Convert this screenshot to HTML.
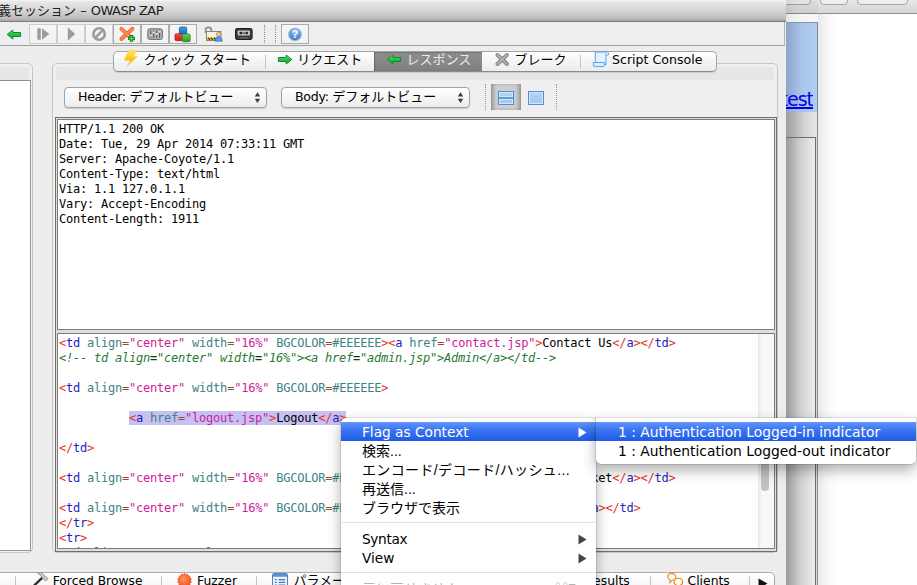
<!DOCTYPE html>
<html lang="ja">
<head>
<meta charset="utf-8">
<title>OWASP ZAP</title>
<style>
*{box-sizing:border-box;margin:0;padding:0}
html,body{width:917px;height:585px;overflow:hidden;background:#fff}
body{position:relative;font-family:"Liberation Sans","Noto Sans CJK JP",sans-serif;font-size:13px;color:#000}
.abs{position:absolute}
/* ---------- background browser window ---------- */
#bgwin{left:786px;top:0;width:131px;height:585px;background:#fff}
#bgtop{left:0;top:0;width:131px;height:14px;background:linear-gradient(#e6e6e6,#d6d6d6);border-bottom:1px solid #8f8f8f}
.bgb{position:absolute;top:-6px;height:11px;border:1px solid #a6a6a6;border-radius:4px;background:#eeeeee}
#bgblue{left:0;top:22px;width:32px;height:90px;background:linear-gradient(90deg,#8ea4c9,#a9c4ea 50%,#b2cdf2);border-right:1px solid #7d8899;border-top:1px solid #8a97ad}
#bgsb1{left:0;top:112px;width:32px;height:25px;background:linear-gradient(90deg,#9c9c9c,#d4d4d4 60%,#e6e6e6);border-right:1px solid #8a8a8a}
#bgsb2{left:0;top:137px;width:30px;height:448px;background:linear-gradient(90deg,#9a9a9a,#d0d0d0 50%,#ececec);border-top:1px solid #6e6e6e;border-right:1px solid #6e6e6e}
#bgsb3{left:30px;top:137px;width:2px;height:448px;background:#d8d8d8;border-right:1px solid #8a8a8a}
#bgshadow{left:32px;top:14px;width:20px;height:571px;background:linear-gradient(90deg,rgba(0,0,0,.085),rgba(0,0,0,.03) 45%,rgba(0,0,0,0))}
#test{left:0;top:88px;width:27px;overflow:hidden;font-size:19px;color:#0000ee;text-decoration:underline;direction:rtl;white-space:nowrap;letter-spacing:-1px;text-decoration-thickness:1.6px;font-family:"DejaVu Sans","Liberation Sans",sans-serif}
/* ---------- main window ---------- */
#win{left:0;top:0;width:786px;height:585px;background:#ededed;border-top-right-radius:5px;overflow:hidden}
#title{left:0;top:0;width:786px;height:22px;background:linear-gradient(#e9e9e9,#d6d6d6 45%,#bcbcbc 88%,#a4a4a4);border-bottom:1px solid #7e7e7e;border-top:1px solid #f2f2f2;border-top-right-radius:5px}
#title span{position:absolute;left:-2px;top:0px;font-size:13px;line-height:20px;white-space:pre;color:#222}
#title span b{font-weight:normal;letter-spacing:-0.55px}
#toolbar{left:0;top:22px;width:785px;height:24px;background:#eeeeee;border-bottom:1px solid #9d9d9d;border-right:1px solid #b5b5b5}

.tb{position:absolute;top:2px;width:28px;height:20px;border:1px solid #cdcdcd;background:linear-gradient(#f6f6f6,#f1f1f1)}
.tb.en{border-color:#ababab}
.tb svg{display:block;margin-top:1px}
.ic{position:absolute}

/* ---------- panels ---------- */
#lpanel{left:-8px;top:63px;width:41px;height:490px;border:1px solid #c6c6c6;border-radius:5px;background:linear-gradient(#e6e6e6,#e6e6e6) 3px 3px / calc(100% - 6px) 13px no-repeat,#efefef}
#lwhite{left:0;top:80px;width:31px;height:471px;background:#fff;border-right:1px solid #949494;border-bottom:1px solid #949494;border-top:1px solid #8e8e8e}
#rpanel{left:52px;top:63px;width:726px;height:490px;border:1px solid #c6c6c6;border-radius:5px;background:linear-gradient(#e6e6e6,#e6e6e6) 3px 3px / calc(100% - 6px) 13px no-repeat,#efefef}
#tabs{left:113px;top:51px;width:604px;height:21px;border:1px solid #a4a4a4;border-bottom-color:#8a8a8a;border-radius:5px;background:linear-gradient(#ffffff,#f4f4f4 50%,#ececec);box-shadow:0 1px 1px rgba(0,0,0,.12);white-space:nowrap;font-size:13px}
.tab{position:absolute;top:0;height:19px;line-height:17px}
.tab .sep{position:absolute;right:0;top:3px;height:14px;width:1px;background:#c4c4c4}
.tab span{position:absolute;top:-1px;white-space:nowrap}
.tab svg{position:absolute}
#tsel{background:linear-gradient(#747474,#8c8c8c 2px,#888 50%,#7f7f7f);color:#ececec;box-shadow:inset 1px 0 1px rgba(0,0,0,.25)}
.combo{position:absolute;top:87px;height:21px;border:1px solid #a3a3a3;border-radius:4px;background:linear-gradient(#ffffff,#f6f6f6 50%,#ececec);box-shadow:0 1px 1px rgba(0,0,0,.15);font-size:13px;line-height:18px;white-space:nowrap}
.combo span{position:absolute;top:0}
.combo svg{position:absolute;right:5.5px;top:4px}
.vb{width:16px;height:14px;border:1px solid #4f8fd8;background:linear-gradient(#b4d2f4,#a4c6ee);box-shadow:inset 0 0 0 1px #d4e6fa}
.vb i{position:absolute;left:0;right:0;top:5px;height:2px;background:#5f9be0;box-shadow:0 1px 0 #d4e6fa,0 -1px 0 #d4e6fa}
.lat{font-family:"DejaVu Sans","Liberation Sans",sans-serif}

/* ---------- text areas ---------- */
#split{left:55px;top:117px;width:722px;height:435px;border:1px solid #6f6f6f;background:#dedede}
.ta{position:absolute;left:1px;width:718px;border:1px solid #7c7c7c;background:#fff;overflow:hidden;font-family:"DejaVu Sans Mono","Liberation Mono",monospace;font-size:12px;letter-spacing:-0.224px;line-height:15px;white-space:pre;padding:2px 0 0 1px;color:#000}
#ta1{top:1px;height:211px}
#ta2{top:215px;height:216px}
.r{color:#e8341f}.b{color:#2222c4}.t{color:#3c8484}.e{color:#9a4a3a}.m{color:#d0209c}.c{color:#1f7a34;font-style:italic}.c b{color:#163a1c}
.sel{background:#c6c1f3}
#vsb{right:0;top:0;width:16px;height:100%;background:linear-gradient(90deg,#ececec,#f7f7f7 3px,#f6f6f6);border-left:1px solid #e6e6e6}
#thumb{left:2px;top:100px;width:8px;height:57px;border-radius:4px;background:#c1c1c1}
/* ---------- bottom tabs ---------- */
#btabs{left:-6px;top:572px;width:781px;height:20px;border:1px solid #a9a9a9;border-radius:5px;background:linear-gradient(#ffffff,#f3f3f3);font-size:13px;white-space:nowrap}
#btabs .sep{position:absolute;top:3px;width:1px;height:16px;background:#c4c4c4}
#btabs span{position:absolute;top:-1.5px;line-height:18px}
#btabs svg{position:absolute}
/* ---------- menus ---------- */
.menu{position:absolute;background:#fff;box-shadow:0 0 0 1px rgba(0,0,0,.10),0 6px 14px rgba(0,0,0,.32);font-size:14px;white-space:nowrap}
.mi{position:absolute;left:0;right:0;height:19px;line-height:20px}
.mi span{position:absolute;top:0}
.mi svg{position:absolute;top:4.5px}
.hi{background:linear-gradient(#6495f8,#4079f3 35%,#1d5ae8);color:#fff}
.msep{position:absolute;left:1px;right:1px;height:1px;background:#e2e2e2}
</style>
</head>
<body>
<div id="bgwin" class="abs">
  <div id="bgtop" class="abs"><i class="bgb" style="left:-6px;width:31px"></i><i class="bgb" style="left:34px;width:28px"></i><i class="bgb" style="left:71px;width:51px"></i></div>
  <div id="bgblue" class="abs"></div>
  <div id="test" class="abs">test</div>
  <div id="bgsb1" class="abs"></div>
  <div id="bgsb2" class="abs"></div>
  <div id="bgsb3" class="abs"></div>
  <div id="bgshadow" class="abs"></div>
  <div class="abs" style="left:0;top:0;width:32px;height:22px;background:linear-gradient(90deg,rgba(0,0,0,.1),rgba(0,0,0,.05) 30%,rgba(0,0,0,.03))"></div>
</div>
<div id="win" class="abs">
  <div id="title" class="abs"><span>義セッション<span class="lat" style="position:static"> – <b>OWASP ZAP</b></span></span></div>
  <div id="toolbar" class="abs">
    <svg class="ic" style="left:6px;top:6.5px" width="17" height="12" viewBox="0 0 17 12"><defs><linearGradient id="ga" x1="0" y1="0" x2="0" y2="1"><stop offset="0" stop-color="#7be88a"/><stop offset=".5" stop-color="#22c244"/><stop offset="1" stop-color="#18a836"/></linearGradient></defs><path d="M1.2 5.5 L6.8 1 L6.8 3.5 L14.6 3.5 L14.6 7.5 L6.8 7.5 L6.8 10 Z" fill="url(#ga)" stroke="#0e8a2c" stroke-width="1" stroke-linejoin="round"/></svg>
    <div class="tb" style="left:29px"><svg width="26" height="17" viewBox="0 0 26 17"><rect x="7.3" y="2.3" width="3.5" height="11.4" rx=".6" fill="#9b9b9b"/><path d="M12 2.3 L19.3 8 L12 13.7 Z" fill="#9b9b9b"/></svg></div>
    <div class="tb" style="left:57px"><svg width="26" height="17" viewBox="0 0 26 17"><path d="M9.8 1.2 L17.2 8 L9.8 14.8 Z" fill="#9b9b9b"/></svg></div>
    <div class="tb" style="left:85px"><svg width="26" height="17" viewBox="0 0 26 17"><circle cx="13.1" cy="8" r="5.7" fill="none" stroke="#9b9b9b" stroke-width="2.6"/><path d="M9.3 11.8 L16.9 4.2" stroke="#9b9b9b" stroke-width="2.6"/></svg></div>
    <div class="tb en" style="left:113px"><svg width="26" height="17" viewBox="0 0 26 17"><path d="M7.4 2.8 L18.4 13 M18.4 2.8 L7.4 13" stroke="#ec5a2c" stroke-width="3.8" stroke-linecap="round"/><path d="M7.4 2.8 L18.4 13 M18.4 2.8 L7.4 13" stroke="#fa8a54" stroke-width="2.3" stroke-linecap="round"/><path d="M17.5 9 V15.8 M14.1 12.4 H20.9" stroke="#0c7a1c" stroke-width="3.3"/><path d="M17.5 9.9 V14.9 M15 12.4 H20" stroke="#3ada44" stroke-width="1.5"/></svg></div>
    <div class="tb en" style="left:141px"><svg width="26" height="17" viewBox="0 0 26 17"><rect x="5.8" y="2.8" width="14.6" height="10.6" rx="1.8" fill="#b0b0b0" stroke="#6e6e6e" stroke-width="1"/><path d="M8.7 4.5 V11.8 M11.7 4.5 V11.8 M14.7 4.5 V11.8 M17.6 4.5 V11.8" stroke="#5a5a5a" stroke-width="1.1"/><g fill="#f0f0f0"><circle cx="8.7" cy="9.6" r="1"/><circle cx="11.7" cy="6.4" r="1"/><circle cx="14.7" cy="8" r="1"/><circle cx="17.6" cy="5.8" r="1"/></g></svg></div>
    <div class="tb en" style="left:169px"><svg width="26" height="17" viewBox="0 0 26 17"><defs><linearGradient id="gb" x1="0" y1="0" x2="0" y2="1"><stop offset="0" stop-color="#3aa0ea"/><stop offset="1" stop-color="#1560c0"/></linearGradient><linearGradient id="gr" x1="0" y1="0" x2="0" y2="1"><stop offset="0" stop-color="#f25040"/><stop offset="1" stop-color="#d01c18"/></linearGradient><linearGradient id="gg" x1="0" y1="0" x2="0" y2="1"><stop offset="0" stop-color="#6ad060"/><stop offset="1" stop-color="#2a9a2a"/></linearGradient></defs><rect x="9.3" y="1" width="7.4" height="8" rx="1.4" fill="url(#gb)" stroke="#14509c" stroke-width=".7"/><rect x="5" y="7.7" width="7.8" height="7" rx="1.4" fill="url(#gr)" stroke="#a01410" stroke-width=".7"/><rect x="12.2" y="8" width="8" height="7.8" rx="1.4" fill="url(#gg)" stroke="#1f7d1c" stroke-width=".7"/></svg></div>
    <svg class="ic" style="left:203px;top:4px" width="21" height="16" viewBox="0 0 21 16"><path d="M2.6 7 V4.2 a2.9 2.9 0 0 1 5.8 0 V6" fill="none" stroke="#8e8e8e" stroke-width="1.7"/><rect x="3.5" y="5.5" width="14.5" height="9" fill="#f6f2e2" stroke="#8c8672" stroke-width="1"/><rect x="4" y="11.6" width="10" height="2.4" fill="#eab818"/><path d="M5 11.6 l2 2.4 M8 11.6 l2 2.4 M11 11.6 l2 2.4" stroke="#2e2e2e" stroke-width="1.1"/><circle cx="15.6" cy="8.4" r="2.2" fill="#f1c9a0" stroke="#8a6a48" stroke-width=".6"/><path d="M12 15.2 q0 -4.4 3.6 -4.4 q3.6 0 3.6 4.4 Z" fill="#5a9ae8" stroke="#2a62b0" stroke-width=".6"/></svg>
    <svg class="ic" style="left:235px;top:6px" width="18" height="12" viewBox="0 0 18 12"><rect x=".5" y=".5" width="16.6" height="11" rx="1.6" fill="#3a3a3a" stroke="#1c1c1c"/><rect x="2.6" y="2.6" width="12.4" height="5" rx="1" fill="#c4c4c4"/><circle cx="5.8" cy="5.1" r="1.4" fill="#2a2a2a"/><circle cx="11.8" cy="5.1" r="1.4" fill="#2a2a2a"/><rect x="7.2" y="4.2" width="3.2" height="1.9" fill="#6a6a6a"/><path d="M4 11 L5 9 H12.6 L13.6 11" fill="#5a5a5a"/></svg>
    <div class="abs" style="left:264px;top:3px;width:0;height:18px;border-left:1px dotted #8c8c8c"></div>
    <div class="abs" style="left:275px;top:3px;width:0;height:18px;border-left:1px dotted #8c8c8c"></div>
    <div class="tb en" style="left:281px"><svg width="26" height="17" viewBox="0 0 26 17"><defs><radialGradient id="hg" cx=".5" cy=".3" r=".75"><stop offset="0" stop-color="#9cc8f6"/><stop offset="1" stop-color="#2c6cc4"/></radialGradient></defs><circle cx="13" cy="8.4" r="6.4" fill="url(#hg)" stroke="#a8c0e0" stroke-width="1.2"/><text x="13" y="12.3" font-size="10.5" font-weight="bold" text-anchor="middle" fill="#fff" font-family="Liberation Sans, sans-serif">?</text></svg></div>
  </div>
  <div id="lpanel" class="abs"></div>
  <div id="lwhite" class="abs"></div>
  <div id="rpanel" class="abs"></div>
  <div id="tabs" class="abs">
    <div class="tab" style="left:0;width:152px"><svg style="left:8px;top:-3px" width="18" height="21" viewBox="8 -3 18 21"><defs><linearGradient id="gl" x1="0" y1="0" x2="0" y2="1"><stop offset="0" stop-color="#ffe94a"/><stop offset=".55" stop-color="#fbc31c"/><stop offset="1" stop-color="#e8980e"/></linearGradient></defs><path d="M14.6 -1.2 L23.7 -1.6 L19 4 L23.3 4.5 L12.4 15 L16.3 8.8 L10.2 8 Z" fill="url(#gl)" stroke="#f6d66a" stroke-width=".9" stroke-linejoin="round"/></svg><span style="left:29.5px">クイック スタート</span><i class="sep"></i></div>
    <div class="tab" style="left:152px;width:108px"><svg style="left:9.6px;top:2.4px" width="17" height="12" viewBox="0 0 17 12"><path d="M15.8 5.5 L10.2 1 L10.2 3.5 L2.4 3.5 L2.4 7.5 L10.2 7.5 L10.2 10 Z" fill="url(#ga)" stroke="#0e8a2c" stroke-width="1" stroke-linejoin="round"/></svg><span style="left:31.3px">リクエスト</span></div>
    <div class="tab" id="tsel" style="left:260px;width:107.6px"><svg style="left:12px;top:2.4px" width="17" height="12" viewBox="0 0 17 12"><path d="M1.2 5.5 L6.8 1 L6.8 3.5 L14.6 3.5 L14.6 7.5 L6.8 7.5 L6.8 10 Z" fill="url(#ga)" stroke="#0e8a2c" stroke-width="1" stroke-linejoin="round"/></svg><span style="left:32.5px">レスポンス</span></div>
    <div class="tab" style="left:367px;width:100px"><svg style="left:13px;top:0" width="16" height="15" viewBox="0 0 16 15"><path d="M3.4 2.9 L13 12 M13 2.9 L3.4 12" stroke="#7a7a7a" stroke-width="3.8" stroke-linecap="round"/><path d="M3.4 2.9 L13 12 M13 2.9 L3.4 12" stroke="#adadad" stroke-width="2.2" stroke-linecap="round"/></svg><span style="left:33.5px">ブレーク</span><i class="sep"></i></div>
    <div class="tab" style="left:467px;width:136px"><svg style="left:10px;top:-1px" width="19" height="17" viewBox="0 0 19 17"><path d="M4.3 1 H15 V13.5 H4.3 Z" fill="#e6f3ff" stroke="#5ba3ea" stroke-width="1"/><path d="M15 1 a1.6 1.6 0 0 1 2.4 1.6 V4 H15" fill="#e6f3ff" stroke="#5ba3ea" stroke-width="1"/><path d="M2.3 11.5 H13.5 V14 a1.6 1.6 0 0 1 -1.6 1.6 H3.9 a1.6 1.6 0 0 1 -1.6 -1.6 Z" fill="#d8ecff" stroke="#5ba3ea" stroke-width="1"/></svg><span class="lat" style="left:31px;font-size:12.6px">Script Console</span></div>
  </div>
  <div class="abs" style="left:485px;top:84px;width:0;height:26px;border-left:1px dotted #9a9a9a"></div>
  <div class="abs" style="left:556px;top:84px;width:0;height:26px;border-left:1px dotted #9a9a9a"></div>
  <div class="abs" style="left:491px;top:84px;width:30px;height:26px;background:#cecece;box-shadow:inset 4px 0 4px -2px rgba(0,0,0,.32),inset -4px 0 4px -2px rgba(0,0,0,.32)"></div>
  <div class="abs vb" style="left:498px;top:91px"><i></i></div>
  <div class="abs vb" style="left:528px;top:91px"></div>
  <div class="combo" style="left:64px;width:203px"><span style="left:13px"><span class="lat" style="position:static;font-size:12.6px;letter-spacing:-0.3px">Header: </span>デフォルトビュー</span><svg width="7" height="12" viewBox="0 0 7 12"><path d="M3.5 0.3 L6.2 4.6 H0.8 Z M3.5 11.1 L6.2 6.8 H0.8 Z" fill="#3c3c3c"/></svg></div>
  <div class="combo" style="left:281px;width:189px"><span style="left:13px"><span class="lat" style="position:static;font-size:12.6px;letter-spacing:-0.3px">Body: </span>デフォルトビュー</span><svg width="7" height="12" viewBox="0 0 7 12"><path d="M3.5 0.3 L6.2 4.6 H0.8 Z M3.5 11.1 L6.2 6.8 H0.8 Z" fill="#3c3c3c"/></svg></div>
  <div id="split" class="abs">
    <div id="ta1" class="ta">HTTP/1.1 200 OK
Date: Tue, 29 Apr 2014 07:33:11 GMT
Server: Apache-Coyote/1.1
Content-Type: text/html
Via: 1.1 127.0.1.1
Vary: Accept-Encoding
Content-Length: 1911</div>
    <div id="ta2" class="ta"><span class="r">&lt;</span><span class="b">td</span> <span class="t">align</span><span class="e">=</span><span class="m">"center"</span> <span class="t">width</span><span class="e">=</span><span class="m">"16%"</span> <span class="t">BGCOLOR</span><span class="e">=</span><span class="t">#EEEEEE</span><span class="r">&gt;</span><span class="r">&lt;</span><span class="b">a</span> <span class="t">href</span><span class="e">=</span><span class="m">"contact.jsp"</span><span class="r">&gt;</span>Contact Us<span class="r">&lt;/</span><span class="b">a</span><span class="r">&gt;</span><span class="r">&lt;/</span><span class="b">td</span><span class="r">&gt;</span>
<span class="c">&lt;!-- td align<b>=</b>"center" width<b>=</b>"16%"&gt;&lt;a href<b>=</b>"admin.jsp"&gt;Admin&lt;/a&gt;&lt;/td--&gt;</span>

<span class="r">&lt;</span><span class="b">td</span> <span class="t">align</span><span class="e">=</span><span class="m">"center"</span> <span class="t">width</span><span class="e">=</span><span class="m">"16%"</span> <span class="t">BGCOLOR</span><span class="e">=</span><span class="t">#EEEEEE</span><span class="r">&gt;</span>

          <span class="sel"><span class="r">&lt;</span><span class="b">a</span> <span class="t">href</span><span class="e">=</span><span class="m">"logout.jsp"</span><span class="r">&gt;</span>Logout<span class="r">&lt;/</span><span class="b">a</span><span class="r">&gt;</span></span>

<span class="r">&lt;/</span><span class="b">td</span><span class="r">&gt;</span>

<span class="r">&lt;</span><span class="b">td</span> <span class="t">align</span><span class="e">=</span><span class="m">"center"</span> <span class="t">width</span><span class="e">=</span><span class="m">"16%"</span> <span class="t">BGCOLOR</span><span class="e">=</span><span class="t">#EEEEEE</span><span class="r">&gt;</span><span class="r">&lt;</span><span class="b">a</span> <span class="t">href</span><span class="e">=</span><span class="m">"basket.jsp"</span><span class="r">&gt;</span>Your Basket<span class="r">&lt;/</span><span class="b">a</span><span class="r">&gt;</span><span class="r">&lt;/</span><span class="b">td</span><span class="r">&gt;</span>

<span class="r">&lt;</span><span class="b">td</span> <span class="t">align</span><span class="e">=</span><span class="m">"center"</span> <span class="t">width</span><span class="e">=</span><span class="m">"16%"</span> <span class="t">BGCOLOR</span><span class="e">=</span><span class="t">#EEEEEE</span><span class="r">&gt;</span><span class="r">&lt;</span><span class="b">a</span> <span class="t">href</span><span class="e">=</span><span class="m">"search.jsp"</span><span class="r">&gt;</span>Search<span class="r">&lt;/</span><span class="b">a</span><span class="r">&gt;</span><span class="r">&lt;/</span><span class="b">td</span><span class="r">&gt;</span>
<span class="r">&lt;/</span><span class="b">tr</span><span class="r">&gt;</span>
<span class="r">&lt;</span><span class="b">tr</span><span class="r">&gt;</span>
<span class="r">&lt;</span><span class="b">td</span> <span class="t">align</span><span class="e">=</span><span class="m">"center"</span> <span class="t">colspan</span><span class="e">=</span><span class="m">"6"</span><span class="r">&gt;</span><div id="vsb" class="abs"><div id="thumb" class="abs"></div></div></div>
  </div>
  <div id="btabs" class="abs">
    <i class="sep" style="left:20px"></i>
    <svg style="left:36px;top:-1px" width="18" height="14" viewBox="36 -1 18 14"><path d="M47.4 4.6 L38 13.6" stroke="#2c2c2c" stroke-width="2.3" stroke-linecap="round"/><path d="M42.3 0 Q47.5 -0.8 49.6 2.6 L53 5.6 L51.2 7.8 L48.6 6.6 Q47 3 42.3 0 Z" fill="#c9c9c9" stroke="#8e8e8e" stroke-width=".8" stroke-linejoin="round"/></svg>
    <span class="lat" style="left:57.7px;font-size:12.3px">Forced Browse</span>
    <i class="sep" style="left:166px"></i>
    <svg style="left:181.5px;top:0px" width="15" height="15" viewBox="0 0 15 15"><defs><radialGradient id="gf" cx=".45" cy=".4" r=".6"><stop offset="0" stop-color="#fb9a5c"/><stop offset="1" stop-color="#ee4a22"/></radialGradient></defs><path d="M7.50 -0.10 L8.90 1.36 L10.80 0.65 L11.43 2.57 L13.44 2.76 L13.18 4.77 L14.91 5.81 L13.80 7.50 L14.91 9.19 L13.18 10.23 L13.44 12.24 L11.43 12.43 L10.80 14.35 L8.90 13.64 L7.50 15.10 L6.10 13.64 L4.20 14.35 L3.57 12.43 L1.56 12.24 L1.82 10.23 L0.09 9.19 L1.20 7.50 L0.09 5.81 L1.82 4.77 L1.56 2.76 L3.57 2.57 L4.20 0.65 L6.10 1.36 Z" fill="url(#gf)"/></svg>
    <span class="lat" style="left:202px;font-size:12.4px">Fuzzer</span>
    <i class="sep" style="left:261px"></i>
    <svg style="left:277px;top:0px" width="16" height="15" viewBox="0 0 17 16"><rect x=".5" y=".5" width="16" height="15" rx="1.5" fill="#eaf3fc" stroke="#4a7ab8"/><rect x="1" y="1" width="15" height="3" fill="#5a92d8"/><path d="M3 7 h2 M7 7 h7 M3 10 h2 M7 10 h7 M3 13 h2 M7 13 h7" stroke="#4a7ab8" stroke-width="1.3"/></svg>
    <span style="left:298.5px">パラメータ</span>
    <span class="lat" style="left:590px;font-size:12.4px">Results</span>
    <i class="sep" style="left:655px"></i>
    <svg style="left:672px;top:0px" width="17" height="15" viewBox="0 0 17 15"><path d="M0.8 3.8 a4 3.4 0 1 1 4.4 3.4 L3 9.6 L3.2 7 A3.6 3.2 0 0 1 0.8 3.8 Z" fill="#fffaf0" stroke="#e8882c" stroke-width="1.1"/><path d="M7 9 a4.3 3.7 0 1 1 5.2 3.6 L13.6 15 L9.6 12.2 A4 3.6 0 0 1 7 9 Z" fill="#fffaf0" stroke="#e8882c" stroke-width="1.1"/></svg>
    <span class="lat" style="left:692.5px;font-size:12.4px">Clients</span>
    <i class="sep" style="left:754px"></i>
    <svg style="left:763px;top:5px" width="10" height="11" viewBox="0 0 10 11"><path d="M0.5 0.5 L9.5 5.5 L0.5 10.5 Z" fill="#111"/></svg>
  </div>
</div>
<div class="menu" id="menu" style="left:341px;top:418px;width:255px;height:180px;border-radius:5px 5px 0 0">
  <div class="mi hi" style="top:4px"><span class="lat" style="left:21px;font-size:13.7px">Flag as Context</span><svg style="left:237px" width="9" height="11" viewBox="0 0 9 11"><path d="M0.5 0.5 L8.5 5.5 L0.5 10.5 Z" fill="#fff"/></svg></div>
  <div class="mi" style="top:23px"><span style="left:21px">検索...</span></div>
  <div class="mi" style="top:42px"><span style="left:21px;letter-spacing:.36px">エンコード/デコード/ハッシュ...</span></div>
  <div class="mi" style="top:61px"><span style="left:21px">再送信...</span></div>
  <div class="mi" style="top:80px"><span style="left:21px">ブラウザで表示</span></div>
  <div class="msep" style="top:104px"></div>
  <div class="mi" style="top:111px"><span class="lat" style="left:21px;font-size:13.7px;letter-spacing:-.35px">Syntax</span><svg style="left:237px" width="9" height="11" viewBox="0 0 9 11"><path d="M0.5 0.5 L8.5 5.5 L0.5 10.5 Z" fill="#444"/></svg></div>
  <div class="mi" style="top:130px"><span class="lat" style="left:21px;font-size:13.7px">View</span><svg style="left:237px" width="9" height="11" viewBox="0 0 9 11"><path d="M0.5 0.5 L8.5 5.5 L0.5 10.5 Z" fill="#444"/></svg></div>
  <div class="msep" style="top:154px"></div>
  <div class="mi" style="top:161px;color:#b4b4b4"><span style="left:21px">元に戻せません</span><span style="left:214px;font-size:13px">⌘Z</span></div>
</div>
<div class="menu" id="submenu" style="left:596px;top:418px;width:320px;height:46px;border-radius:0 0 5px 5px;overflow:hidden">
  <div class="mi hi" style="top:4px"><span class="lat" style="left:22px;font-size:13.85px">1 : Authentication Logged-in indicator</span></div>
  <div class="mi" style="top:23px"><span class="lat" style="left:22px;font-size:13.85px">1 : Authentication Logged-out indicator</span></div>
</div>
</body>
</html>
